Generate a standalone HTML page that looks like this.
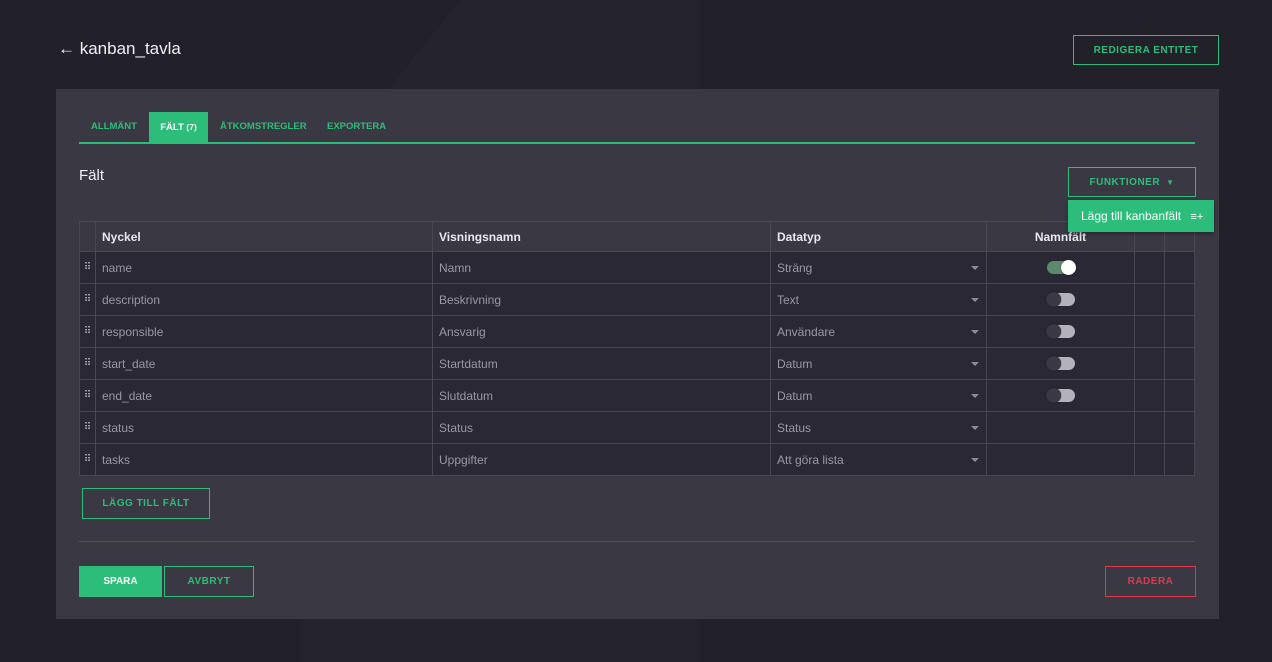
<!DOCTYPE html>
<html><head><style>
*{box-sizing:border-box;margin:0;padding:0}
body{width:1272px;height:662px;background:#22212a;font-family:"Liberation Sans",sans-serif;position:relative;overflow:hidden;color:#ddd}
.abs{position:absolute}
.g{color:#2dbd7a}
.btn{position:absolute;border:1px solid #2dbd7a;color:#2dbd7a;font-size:10px;font-weight:bold;letter-spacing:.5px;display:flex;align-items:center;justify-content:center}
table{position:absolute;left:79px;top:221px;width:1116px;border-collapse:collapse;font-size:12px}
td,th{border:1px solid #4a4753;height:32px;padding:0 6px;text-align:left}
th{background:#3a3843;color:#e8e8f0;font-size:12px;height:30px}
td{background:#2b2836;color:#9a98a2}
.h{width:16px;padding:0;text-align:center;color:#bbb;font-size:10px}
.dd{position:relative}
.dd:after{content:"";position:absolute;right:7px;top:14px;border:4px solid transparent;border-top:4px solid #8a8892;border-bottom:0}
.tg{display:block;margin:0 auto;width:28px;height:13px;border-radius:7px;background:#b3b1bb;position:relative}
.tg:before{content:"";position:absolute;left:-1px;top:-1px;width:15px;height:15px;border-radius:50%;background:#3a3843;box-shadow:0 0 1px #000}
.tg.on{background:#5c8a6c}
.tg.on:before{left:auto;right:-1px;background:#fff}
.tab{position:absolute;top:121px;font-size:9.5px;font-weight:bold;color:#2dbd7a}
</style></head><body>
<div class="abs" style="left:300px;top:0;width:400px;height:662px;background:#25242d;clip-path:polygon(40% 0,100% 0,100% 100%,0 100%,0 30%)"></div>
<div class="abs" style="left:58px;top:39px;font-size:17px;color:#f0f0f5">← kanban_tavla</div>
<div class="btn" style="left:1073px;top:35px;width:146px;height:30px">REDIGERA ENTITET</div>
<div class="abs" style="left:56px;top:89px;width:1163px;height:530px;background:#3a3843"></div>
<div class="abs" style="left:79px;top:142px;width:1116px;height:2px;background:#2dbd7a"></div>
<div class="tab" style="left:91px">ALLMÄNT</div>
<div class="abs" style="left:149px;top:112px;width:59px;height:30px;background:#2dbd7a;color:#fff;font-size:9.5px;font-weight:bold;text-align:center;line-height:30px">FÄLT <span style="font-size:8.5px">(7)</span></div>
<div class="tab" style="left:220px">ÅTKOMSTREGLER</div>
<div class="tab" style="left:327px">EXPORTERA</div>
<div class="abs" style="left:79px;top:167px;font-size:15px;color:#f0f0f5">Fält</div>
<div class="btn" style="left:1068px;top:167px;width:128px;height:30px">FUNKTIONER <span style="margin-left:6px;font-size:8px">▼</span></div>
<table>
<tr><th class="h" style="width:16px"></th><th style="width:337px">Nyckel</th><th style="width:338px">Visningsnamn</th><th style="width:216px">Datatyp</th><th style="width:148px;text-align:center">Namnfält</th><th style="width:30px"></th><th></th></tr>
<tr><td class="h">⠿</td><td>name</td><td>Namn</td><td class="dd">Sträng</td><td><span class="tg on"></span></td><td></td><td></td></tr>
<tr><td class="h">⠿</td><td>description</td><td>Beskrivning</td><td class="dd">Text</td><td><span class="tg"></span></td><td></td><td></td></tr>
<tr><td class="h">⠿</td><td>responsible</td><td>Ansvarig</td><td class="dd">Användare</td><td><span class="tg"></span></td><td></td><td></td></tr>
<tr><td class="h">⠿</td><td>start_date</td><td>Startdatum</td><td class="dd">Datum</td><td><span class="tg"></span></td><td></td><td></td></tr>
<tr><td class="h">⠿</td><td>end_date</td><td>Slutdatum</td><td class="dd">Datum</td><td><span class="tg"></span></td><td></td><td></td></tr>
<tr><td class="h">⠿</td><td>status</td><td>Status</td><td class="dd">Status</td><td></td><td></td><td></td></tr>
<tr><td class="h">⠿</td><td>tasks</td><td>Uppgifter</td><td class="dd">Att göra lista</td><td></td><td></td><td></td></tr>
</table>
<div class="abs" style="left:1068px;top:200px;width:146px;height:32px;background:#2dbd7a;color:#fff;font-size:12px;line-height:32px;padding-left:13px;box-shadow:0 2px 4px rgba(0,0,0,.3)">Lägg till kanbanfält <span style="margin-left:6px;font-size:11px">≡+</span></div>
<div class="btn" style="left:82px;top:488px;width:128px;height:31px">LÄGG TILL FÄLT</div>
<div class="abs" style="left:79px;top:541px;width:1116px;height:1px;background:#55525e"></div>
<div class="abs" style="left:79px;top:566px;width:83px;height:31px;background:#2dbd7a;color:#fff;font-size:10px;font-weight:bold;text-align:center;line-height:31px">SPARA</div>
<div class="btn" style="left:164px;top:566px;width:90px;height:31px">AVBRYT</div>
<div class="btn" style="left:1105px;top:566px;width:91px;height:31px;border-color:#e0384a;color:#e0384a">RADERA</div>
</body></html>
